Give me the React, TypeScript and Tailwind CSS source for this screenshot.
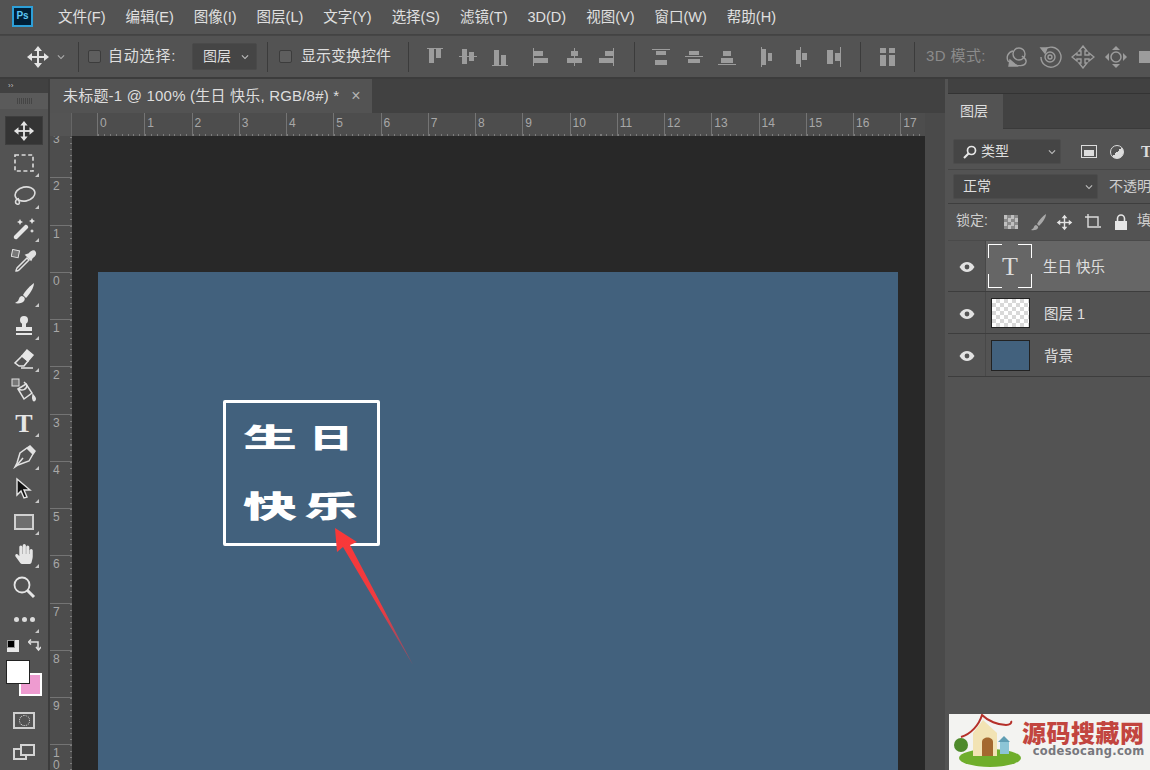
import React from "react";
import { FaHandPaper } from "react-icons/fa";
import { MdKeyboardArrowDown } from "react-icons/md";

const menus = ["文件(F)", "编辑(E)", "图像(I)", "图层(L)", "文字(Y)", "选择(S)", "滤镜(T)", "3D(D)", "视图(V)", "窗口(W)", "帮助(H)"];
const hLabels = ["0", "1", "2", "3", "4", "5", "6", "7", "8", "9", "10", "11", "12", "13", "14", "15", "16", "17"];
const vLabels = ["3", "2", "1", "0", "1", "2", "3", "4", "5", "6", "7", "8", "9", "10"];

type R = [number, number, number, number];

const MoveIcon = ({ size = 24, color = "#e4e4e4" }: { size?: number; color?: string }) => (
  <svg width={size} height={size} viewBox="0 0 24 24" fill={color}>
    <rect x="11" y="5" width="2" height="14" />
    <rect x="5" y="11" width="14" height="2" />
    <path d="M12 1l4 5H8zM12 23l-4-5h8zM1 12l5-4v8zM23 12l-5 4V8z" />
  </svg>
);

const Bars = ({ rects }: { rects: R[] }) => (
  <svg className="shrink-0" width="20" height="22" viewBox="0 0 20 22" fill="#9c9c9c">
    {rects.map((r, i) => (
      <rect key={i} x={r[0]} y={r[1]} width={r[2]} height={r[3]} />
    ))}
  </svg>
);

const alignA: R[][] = [
  [[2, 2, 16, 1], [4, 3, 5, 14], [11, 3, 5, 9]],
  [[1, 10, 18, 1], [4, 3, 5, 15], [11, 6, 5, 9]],
  [[2, 19, 16, 1], [4, 4, 5, 15], [11, 9, 5, 10]],
];
const alignB: R[][] = [
  [[2, 2, 1, 18], [3, 5, 9, 5], [3, 12, 14, 5]],
  [[10, 2, 1, 18], [7, 5, 7, 5], [3, 12, 15, 5]],
  [[17, 2, 1, 18], [9, 5, 8, 5], [3, 12, 14, 5]],
];
const alignC: R[][] = [
  [[1, 3, 18, 1], [5, 5, 10, 4], [4, 14, 12, 5]],
  [[1, 10, 18, 1], [5, 5, 10, 4], [4, 13, 12, 4]],
  [[1, 18, 18, 1], [6, 5, 8, 5], [4, 12, 12, 5]],
];
const alignD: R[][] = [
  [[3, 1, 1, 20], [4, 3, 4, 16], [10, 7, 4, 8]],
  [[9, 1, 1, 20], [5, 4, 4, 14], [11, 7, 5, 7]],
  [[16, 1, 1, 20], [3, 4, 6, 14], [11, 7, 5, 8]],
];

const Sep = ({ className }: { className: string }) => <div className={`w-px h-[30px] bg-[#3b3b3b] shrink-0 ${className}`} />;

const Check = ({ className }: { className: string }) => (
  <div className={`w-[13px] h-[13px] rounded-[2px] border border-[#3c3c3c] bg-[#5e5e5e] shrink-0 ${className}`} />
);

const OptionsBar = () => (
  <div className="h-[44px] shrink-0 flex items-center overflow-hidden border-b-2 border-[#3c3c3c] border-t border-t-[#464646] bg-[#535353] text-[15px] text-[#dedede]">
    <div className="ml-[26px] shrink-0">
      <MoveIcon size={24} />
    </div>
    <MdKeyboardArrowDown className="ml-[4px] shrink-0 text-[#aaaaaa]" size={14} />
    <Sep className="ml-[10px]" />
    <Check className="ml-[9px]" />
    <span className="ml-[7px] w-[69px] shrink-0 whitespace-nowrap tracking-[0.8px]">自动选择:</span>
    <div className="ml-[15px] w-[65px] h-[27px] shrink-0 rounded-[2px] bg-[#454545] border border-[#4a4a4a] flex items-center pl-[10px] text-[14px] whitespace-nowrap">
      图层
      <MdKeyboardArrowDown className="ml-[7px] shrink-0 text-[#bbbbbb]" size={14} />
    </div>
    <Sep className="ml-[10px]" />
    <Check className="ml-[11px]" />
    <span className="ml-[9px] w-[90px] shrink-0 whitespace-nowrap">显示变换控件</span>
    <Sep className="ml-[17px]" />
    <div className="ml-[16px] flex gap-[12.5px] shrink-0">
      {alignA.map((r, i) => <Bars key={i} rects={r} />)}
    </div>
    <div className="ml-[21px] flex gap-[12.5px] shrink-0">
      {alignB.map((r, i) => <Bars key={i} rects={r} />)}
    </div>
    <Sep className="ml-[18px]" />
    <div className="ml-[16px] flex gap-[13px] shrink-0">
      {alignC.map((r, i) => <Bars key={i} rects={r} />)}
    </div>
    <div className="ml-[21px] flex gap-[13px] shrink-0">
      {alignD.map((r, i) => <Bars key={i} rects={r} />)}
    </div>
    <Sep className="ml-[16px]" />
    <div className="ml-[17px] shrink-0">
      <Bars rects={[[2, 2, 6, 5], [11, 2, 6, 5], [2, 9, 6, 11], [11, 9, 6, 11]]} />
    </div>
    <Sep className="ml-[16px]" />
    <span className="ml-[11px] text-[#8b8b8b] whitespace-nowrap w-[62px] shrink-0 tracking-[0.4px]">3D 模式:</span>
    <div className="ml-[17px] flex gap-[9px] shrink-0">
      <svg width="24" height="24" viewBox="0 0 24 24" fill="none" stroke="#9c9c9c" strokeWidth="1.4">
        <circle cx="14" cy="9" r="6" />
        <path d="M8 6c-5 1-7 6-5 10l5 3c4 2 12 3 13-2 1-3-2-4-4-6" />
        <path d="M5 15l7 6H4z" fill="#9c9c9c" />
      </svg>
      <svg width="24" height="24" viewBox="0 0 24 24" fill="none" stroke="#9c9c9c" strokeWidth="1.4">
        <path d="M6 5a10 10 0 1 1-3 7" />
        <path d="M3 3l6 0-2 5z" fill="#9c9c9c" />
        <circle cx="12" cy="12" r="5" />
        <circle cx="12" cy="12" r="2" />
      </svg>
      <svg width="24" height="24" viewBox="0 0 24 24" fill="none" stroke="#9c9c9c" strokeWidth="1.4">
        <path d="M12 1l4 5h-2v4h4V8l5 4-5 4v-2h-4v4h2l-4 5-4-5h2v-4H6v2l-5-4 5-4v2h4V6H8z" />
      </svg>
      <svg width="24" height="24" viewBox="0 0 24 24" fill="#9c9c9c">
        <path d="M12 1l4 4H8zM12 23l-4-4h8zM1 12l4-4v8zM23 12l-4 4V8z" />
        <circle cx="12" cy="12" r="5" fill="none" stroke="#9c9c9c" strokeWidth="1.5" />
      </svg>
      <svg width="24" height="24" viewBox="0 0 24 24" fill="#9c9c9c">
        <rect x="2" y="6" width="12" height="12" />
        <path d="M15 12l7-5v10z" />
      </svg>
    </div>
  </div>
);

const tools: { icon: React.ReactNode; corner: boolean }[] = [
  {
    corner: true,
    icon: (
      <svg width="20" height="18" viewBox="0 0 20 18" fill="none" stroke="#dcdcdc" strokeWidth="1.6" strokeDasharray="4 2.6">
        <rect x="1" y="1" width="18" height="16" />
      </svg>
    ),
  },
  {
    corner: true,
    icon: (
      <svg width="24" height="24" viewBox="0 0 24 24" fill="none" stroke="#dcdcdc" strokeWidth="1.6">
        <ellipse cx="13" cy="10" rx="10" ry="7" transform="rotate(-12 13 10)" />
        <path d="M5 15c-2 2-2 4 0 5 2 1 3-1 2-3l-1-3" />
      </svg>
    ),
  },
  {
    corner: true,
    icon: (
      <svg width="24" height="24" viewBox="0 0 24 24" fill="#e6e6e6">
        <path d="M2 20l11-11c1-1 4 1 3 3L5 23c-2 1-4-1-3-3z" />
        <path d="M8 3l1 2 2 1-2 1-1 2-1-2-2-1 2-1zM20 2l1 2 2 1-2 1-1 2-1-2-2-1 2-1zM20 13l.7 1.3 1.3.7-1.3.7-.7 1.3-.7-1.3-1.3-.7 1.3-.7z" />
      </svg>
    ),
  },
  {
    corner: false,
    icon: (
      <svg width="26" height="24" viewBox="0 0 26 24" fill="none" stroke="#e2e2e2" strokeWidth="1.5">
        <path d="M16 9l-10 10c-1 2-1 3-1 3s2 0 3-1l10-10z" />
        <path d="M15 6l5 5 1-2c3-2 4-4 3-6s-4-1-6 2z" fill="#e2e2e2" />
        <rect x="1" y="1" width="7" height="7" fill="#777" strokeWidth="1" transform="rotate(12 4 4)" />
      </svg>
    ),
  },
  {
    corner: true,
    icon: (
      <svg width="22" height="24" viewBox="0 0 22 24" fill="#e6e6e6">
        <path d="M21 1c-3 2-9 8-11 12l3 3c3-3 8-10 8-15z" />
        <path d="M9 14c-3 0-3 4-4 5-1 1-2 1-3 2 3 1 8 0 9-2 1-1 1-3 0-4z" />
      </svg>
    ),
  },
  {
    corner: true,
    icon: (
      <svg width="22" height="24" viewBox="0 0 22 24" fill="#e6e6e6">
        <circle cx="11" cy="6" r="4" />
        <path d="M9 9h4v4h6v4H3v-4h6z" />
        <rect x="3" y="19" width="16" height="2" />
      </svg>
    ),
  },
  {
    corner: true,
    icon: (
      <svg width="24" height="24" viewBox="0 0 24 24" fill="none" stroke="#e6e6e6" strokeWidth="1.5">
        <path d="M15 3l6 5-5 6-6-5z" fill="#e6e6e6" />
        <path d="M10 9l6 5-4 5H7l-4-3z" />
        <path d="M9 21h12" />
      </svg>
    ),
  },
  {
    corner: false,
    icon: (
      <svg width="26" height="26" viewBox="0 0 26 26" fill="none" stroke="#e2e2e2" strokeWidth="1.5">
        <rect x="1" y="1" width="7" height="7" fill="#777" strokeWidth="1" />
        <path d="M7 11l8-5 6 9-8 6z" />
        <path d="M7 11c4 2 9 1 9-4M13 4l3 3" />
        <path d="M22 17c2 2 3 3 2 5s-3 0-2-5z" fill="#e2e2e2" />
      </svg>
    ),
  },
  {
    corner: true,
    icon: <span className="font-['Liberation_Serif',serif] text-[26px] leading-none text-[#e6e6e6] font-bold">T</span>,
  },
  {
    corner: true,
    icon: (
      <svg width="24" height="24" viewBox="0 0 24 24" fill="none" stroke="#e2e2e2" strokeWidth="1.5">
        <path d="M15 3l6 6-4 7-11 4-3 2 2-4 3-10z" />
        <path d="M15 3l3-2 5 5-2 3" fill="#e2e2e2" />
        <path d="M5 20l6-7" />
      </svg>
    ),
  },
  {
    corner: true,
    icon: (
      <svg width="20" height="24" viewBox="0 0 20 24" fill="#111111" stroke="#e6e6e6" strokeWidth="1.4">
        <path d="M3 2l0 16 4-4 3 7 3-1-3-7 6 0z" />
      </svg>
    ),
  },
  {
    corner: true,
    icon: <div className="w-[20px] h-[16px] border-2 border-[#d0d0d0] bg-[#6e6e6e]" />,
  },
  {
    corner: true,
    icon: <FaHandPaper size={20} color="#e6e6e6" />,
  },
  {
    corner: false,
    icon: (
      <svg width="24" height="24" viewBox="0 0 24 24" fill="none" stroke="#e6e6e6" strokeWidth="1.8">
        <circle cx="10" cy="10" r="7.5" />
        <path d="M15.5 15.5l6.5 6.5" strokeWidth="3" />
      </svg>
    ),
  },
  {
    corner: true,
    icon: (
      <div className="flex gap-[3px]">
        <div className="w-[5px] h-[5px] rounded-full bg-[#dcdcdc]" />
        <div className="w-[5px] h-[5px] rounded-full bg-[#dcdcdc]" />
        <div className="w-[5px] h-[5px] rounded-full bg-[#dcdcdc]" />
      </div>
    ),
  },
];

const Toolbar = () => (
  <div className="w-[50px] shrink-0 border-r-2 border-[#3c3c3c] bg-[#535353] flex flex-col items-center">
    <div className="w-full h-[14px] bg-[#414141] text-[8px] leading-[14px] pl-[8px] text-[#bdbdbd]">››</div>
    <div className="w-full h-[16px] bg-[#5a5a5a] flex items-center justify-center gap-[1px]">
      {[0, 1, 2, 3, 4, 5, 6, 7].map((i) => (
        <div key={i} className="w-px h-[6px] bg-[#454545]" />
      ))}
    </div>
    <div className="mt-[7px] w-[38px] h-[29px] bg-[#343434] border border-[#3e3e3e] flex items-center justify-center">
      <MoveIcon size={22} />
    </div>
    <div className="mt-[2px] w-full flex flex-col items-center">
      {tools.map((t, i) => (
        <div key={i} className="relative w-full h-[32.6px] flex items-center justify-center">
          {t.icon}
          {t.corner && (
            <div className="absolute right-[9px] bottom-[3px] w-0 h-0 border-l-[4px] border-l-transparent border-b-[4px] border-b-[#c8c8c8]" />
          )}
        </div>
      ))}
    </div>
    <div className="w-[34px] h-[14px] flex items-center justify-between mt-[3px]">
      <div className="relative w-[12px] h-[12px] bg-[#e8e8e8]">
        <div className="absolute left-0 top-0 w-[8px] h-[8px] bg-black border border-[#999]" />
      </div>
      <svg width="13" height="13" viewBox="0 0 13 13" fill="none" stroke="#e0e0e0" strokeWidth="1.5">
        <path d="M1 3h9v7" />
        <path d="M3 0.5L0.5 3 3 5.5" />
        <path d="M8 8l2.5 3L13 8" />
      </svg>
    </div>
    <div className="relative w-[36px] h-[36px] mt-[7px]">
      <div className="absolute right-0 bottom-0 w-[23px] h-[23px] bg-[#ee9bd0] border-2 border-white" />
      <div className="absolute left-0 top-0 w-[24px] h-[24px] bg-white border border-[#222]" />
    </div>
    <div className="mt-[16px] w-[22px] h-[17px] border-2 border-[#cfcfcf] flex items-center justify-center">
      <div className="w-[11px] h-[11px] rounded-full border border-dotted border-[#e0e0e0]" />
    </div>
    <div className="relative mt-[15px] w-[22px] h-[16px]">
      <div className="absolute left-0 bottom-0 w-[14px] h-[12px] border-2 border-[#d4d4d4]" />
      <div className="absolute right-0 top-0 w-[15px] h-[12px] border-2 border-[#d4d4d4] bg-[#535353]" />
    </div>
  </div>
);

const HRuler = () => (
  <div className="h-[23px] shrink-0 flex bg-[#464646]">
    <div className="w-[22px] h-full bg-[#545454] border-r border-[#666666]" />
    <div className="w-[853px] h-full overflow-hidden flex pl-[25px] bg-[#4d4d4d]">
      {hLabels.map((l) => (
        <div key={l} className="w-[47.25px] shrink-0 h-full border-l border-[#747474] flex flex-col">
          <span className="pl-[2px] pt-[3px] text-[12px] leading-[14px] text-[#a8a8a8]">{l}</span>
          <div className="mt-auto h-[2px] bg-[repeating-linear-gradient(90deg,#7c7c7c_0_1px,transparent_1px_5.9px)]" />
        </div>
      ))}
    </div>
    <div className="flex-1 bg-[#4a4a4a]" />
  </div>
);

const VRuler = () => (
  <div className="w-[22px] shrink-0 h-full overflow-hidden bg-[#4d4d4d]">
    <div className="-mt-[6px]">
      {vLabels.map((l, i) => (
        <div key={i} className="h-[47.25px] border-t border-[#747474] relative text-[12px] leading-[12px] pl-[3px] pt-[2px] text-[#a8a8a8]">
          {l.split("").map((c, k) => (
            <div key={k}>{c}</div>
          ))}
          <div className="absolute right-0 top-0 bottom-0 w-[2px] bg-[repeating-linear-gradient(180deg,#7c7c7c_0_1px,transparent_1px_5.9px)]" />
        </div>
      ))}
    </div>
  </div>
);

const Artboard = () => (
  <div className="relative w-[800px] h-[520px] bg-[#42617d] ml-[26px] pl-[125px] pt-[128px] font-['Noto_Sans_CJK_SC',sans-serif]">
    <div className="w-[157px] h-[146px] border-[3px] border-white rounded-[2px] text-white font-black">
      <div className="flex h-[43px] mt-[11px] items-center pl-[17px]">
        <span className="w-[66px] text-[54px] leading-none scale-y-[0.48] origin-center">生</span>
        <span className="w-[40px] text-[44px] leading-none scale-y-[0.62] origin-center">日</span>
      </div>
      <div className="flex h-[43px] mt-[25px] items-center pl-[17px]">
        <span className="w-[61px] text-[54px] leading-none scale-y-[0.55] origin-center">快</span>
        <span className="w-[54px] text-[54px] leading-none scale-y-[0.55] origin-center">乐</span>
      </div>
    </div>
    <svg className="absolute left-[228px] top-[250px]" width="100" height="150" viewBox="0 0 100 150">
      <defs>
        <linearGradient id="arrowFade" x1="0" y1="0" x2="0.55" y2="1">
          <stop offset="0" stopColor="#f93838" />
          <stop offset="0.7" stopColor="#ee3b40" />
          <stop offset="1" stopColor="#a24a5e" />
        </linearGradient>
      </defs>
      <path d="M9 6L31 20L24 23L87 143L17 25L11 30Z" fill="url(#arrowFade)" />
    </svg>
  </div>
);

const Eye = () => (
  <svg className="mt-[2px]" width="16" height="12" viewBox="0 0 16 12">
    <path d="M0.5 6C3 2 5.5 1 8 1s5 1 7.5 5C13 10 10.5 11 8 11S3 10 0.5 6z" fill="#e2e2e2" />
    <circle cx="8" cy="6" r="2.4" fill="#535353" />
  </svg>
);

const LayerRow = ({
  active,
  h,
  thumb,
  label,
}: {
  active?: boolean;
  h: string;
  thumb: React.ReactNode;
  label: React.ReactNode;
}) => (
  <div className={`flex border-b border-[#3d3d3d] ${h}`}>
    <div className="w-[38px] shrink-0 flex items-center justify-center border-r border-[#484848]">
      <Eye />
    </div>
    <div className={`flex-1 flex items-center whitespace-nowrap text-[14.5px] text-[#e0e0e0] ${active ? "bg-[#666666]" : ""}`}>
      {thumb}
      {label}
    </div>
  </div>
);

const LayersPanel = () => (
  <div className="flex-1 min-w-0 ml-[3px] bg-[#535353] flex flex-col text-[14px] text-[#dedede] overflow-hidden">
    <div className="h-[15px] shrink-0 bg-[#414141] border-b border-[#333333]" />
    <div className="h-[35px] shrink-0 flex bg-[#424242]">
      <div className="w-[55px] bg-[#535353] flex items-center pl-[12px]">图层</div>
      <div className="flex-1 border-b border-[#3a3a3a]" />
    </div>
    <div className="shrink-0 h-[41px] pt-[5px] flex items-center border-b border-[#464646] bg-[#535353] pl-[5px]">
      <div className="w-[108px] h-[25px] shrink-0 rounded-[2px] bg-[#454545] border border-[#4c4c4c] flex items-center pl-[9px]">
        <svg width="14" height="14" viewBox="0 0 14 14" fill="none" stroke="#e6e6e6" strokeWidth="1.7">
          <circle cx="8.5" cy="5.5" r="4" />
          <path d="M5.5 8.5L1 13" strokeWidth="2.2" />
        </svg>
        <span className="ml-[4px]">类型</span>
        <MdKeyboardArrowDown className="ml-auto mr-[1px] text-[#bbbbbb]" size={14} />
      </div>
      <div className="ml-[20px] w-[16px] h-[13px] border border-[#dcdcdc] flex items-end justify-center shrink-0">
        <div className="w-[10px] h-[6px] bg-[#dcdcdc] mb-[1px]" />
      </div>
      <div className="ml-[13px] w-[14px] h-[14px] rounded-full border border-[#dcdcdc] bg-[linear-gradient(135deg,#535353_50%,#dcdcdc_50%)] shrink-0" />
      <span className="ml-[17px] font-['Liberation_Serif',serif] font-bold text-[16px] text-[#dcdcdc]">T</span>
    </div>
    <div className="shrink-0 h-[34px] flex items-center border-b border-[#3e3e3e] pl-[5px]">
      <div className="w-[145px] h-[25px] shrink-0 rounded-[2px] bg-[#454545] border border-[#4c4c4c] flex items-center pl-[9px]">
        正常
        <MdKeyboardArrowDown className="ml-auto mr-[1px] text-[#bbbbbb]" size={14} />
      </div>
      <span className="ml-[11px] whitespace-nowrap text-[#cfcfcf]">不透明</span>
    </div>
    <div className="shrink-0 h-[37px] flex items-center pl-[8px] border-b border-[#4a4a4a]">
      <span className="w-[38px] shrink-0 text-[#cfcfcf] -mt-[4px]">锁定:</span>
      <div className="ml-[10px] w-[14px] h-[14px] shrink-0 bg-[repeating-conic-gradient(#8a8a8a_0_25%,#c0c0c0_0_50%)] bg-[length:7px_7px]" />
      <svg className="ml-[11px] shrink-0" width="18" height="18" viewBox="0 0 18 18" fill="#a8a8a8">
        <path d="M17 1c-3 2-7 6-9 10l2 2c3-3 7-8 7-12zM7 12c-2 0-2 3-3 3.5L2 17c3 .5 6 0 7-2 .5-1 0-2-2-3z" />
      </svg>
      <div className="ml-[9px] shrink-0">
        <MoveIcon size={17} />
      </div>
      <svg className="ml-[11px] shrink-0" width="18" height="18" viewBox="0 0 18 18" fill="none" stroke="#dcdcdc" strokeWidth="1.4">
        <path d="M4 1v13h13M1 4h13v9" />
      </svg>
      <svg className="ml-[12px] shrink-0" width="14" height="16" viewBox="0 0 14 16" fill="#e6e6e6">
        <rect x="1" y="7" width="12" height="9" />
        <path d="M3.5 7V4.5a3.5 3.5 0 0 1 7 0V7" fill="none" stroke="#e6e6e6" strokeWidth="1.6" />
      </svg>
      <span className="ml-[9px] -mt-[4px] text-[#cfcfcf]">填</span>
    </div>
    <LayerRow
      active
      h="h-[51px] shrink-0"
      thumb={
        <div className="relative w-[44px] h-[44px] ml-[2px] shrink-0 flex items-center justify-center font-['Liberation_Serif',serif] text-[26px] text-[#dcdcdc]">
          T
          <div className="absolute left-0 top-0 w-[14px] h-[14px] border-l border-t border-white" />
          <div className="absolute right-0 top-0 w-[14px] h-[14px] border-r border-t border-white" />
          <div className="absolute left-0 bottom-0 w-[14px] h-[14px] border-l border-b border-white" />
          <div className="absolute right-0 bottom-0 w-[14px] h-[14px] border-r border-b border-white" />
        </div>
      }
      label={<span className="ml-[11px] mt-[3px]">生日 快乐</span>}
    />
    <LayerRow
      h="h-[42px] shrink-0"
      thumb={
        <div className="w-[39px] h-[30px] ml-[5px] shrink-0 border border-[#222222] bg-[repeating-conic-gradient(#d8d8d8_0_25%,#ffffff_0_50%)] bg-[length:8px_8px]" />
      }
      label={<span className="ml-[14px] mt-[5px]">图层 1</span>}
    />
    <LayerRow
      h="h-[43px] shrink-0"
      thumb={<div className="w-[39px] h-[31px] ml-[5px] shrink-0 border border-[#222222] bg-[#42617d]" />}
      label={<span className="ml-[14px] mt-[3px]">背景</span>}
    />
    <div className="mt-auto h-[56px] shrink-0 bg-[#f3f3f1] flex items-center overflow-hidden ml-px">
      <svg className="shrink-0" width="73" height="56" viewBox="0 0 73 56">
        <ellipse cx="41" cy="44" rx="31" ry="9" fill="#6fae2c" />
        <circle cx="12" cy="31" r="7" fill="#4e8a2a" />
        <path d="M24 42V19l10-13 14 13v23z" fill="#f2e3b4" />
        <path d="M12 23C22 20 30 11 33 1c6 6 16 10 24 10 4 0 6-2 5-4" fill="none" stroke="#b5302a" strokeWidth="2" />
        <path d="M33 42V28c0-6 11-6 11 0v14z" fill="#a4682f" />
        <rect x="51" y="27" width="9" height="13" fill="#8cc5d6" />
        <path d="M49 28l6-6 6 6z" fill="#5f9db3" />
      </svg>
      <div className="flex flex-col items-end pb-[6px]">
        <span className="font-['Noto_Sans_CJK_SC',sans-serif] font-black text-[24px] leading-[24px] tracking-[0.5px] text-[#c2453f] whitespace-nowrap">源码搜藏网</span>
        <span className="mt-[1px] font-['DejaVu_Sans',sans-serif] font-bold text-[11.5px] leading-[13px] tracking-[0.3px] text-[#77777d] whitespace-nowrap">codesocang.com</span>
      </div>
    </div>
  </div>
);

export default function App() {
  return (
    <div className="w-[1150px] h-[770px] overflow-hidden flex flex-col bg-[#535353] font-['Liberation_Sans','Noto_Sans_CJK_SC',sans-serif]">
      <div className="h-[35px] shrink-0 flex items-center border-b border-[#434343] bg-[#535353]">
        <div className="ml-[12px] -mt-[2px] w-[21px] h-[21px] bg-[#001e36] border-2 border-[#2d9fd8] flex items-center justify-center text-[10px] font-bold text-[#5cc6f5] leading-none">
          Ps
        </div>
        <div className="ml-[25px] mt-[1px] flex gap-[20px] text-[14.5px] text-[#e0e0e0] whitespace-nowrap">
          {menus.map((m) => (
            <span key={m}>{m}</span>
          ))}
        </div>
      </div>
      <OptionsBar />
      <div className="flex-1 min-h-0 flex">
        <Toolbar />
        <div className="w-[895px] shrink-0 flex flex-col bg-[#4a4a4a] min-h-0">
          <div className="h-[34px] shrink-0 bg-[#414141] flex">
            <div className="w-[322px] h-full bg-[#535353] flex items-center pl-[13px] text-[15px] tracking-[0.2px] text-[#dedede] whitespace-nowrap">
              未标题-1 @ 100% (生日 快乐, RGB/8#) *
              <span className="ml-[12px] text-[16px] leading-none text-[#b4b4b4]">×</span>
            </div>
          </div>
          <HRuler />
          <div className="flex-1 min-h-0 flex">
            <VRuler />
            <div className="w-[853px] shrink-0 h-full overflow-hidden bg-[#282828] pt-[136px]">
              <Artboard />
            </div>
          </div>
        </div>
        <LayersPanel />
      </div>
    </div>
  );
}
